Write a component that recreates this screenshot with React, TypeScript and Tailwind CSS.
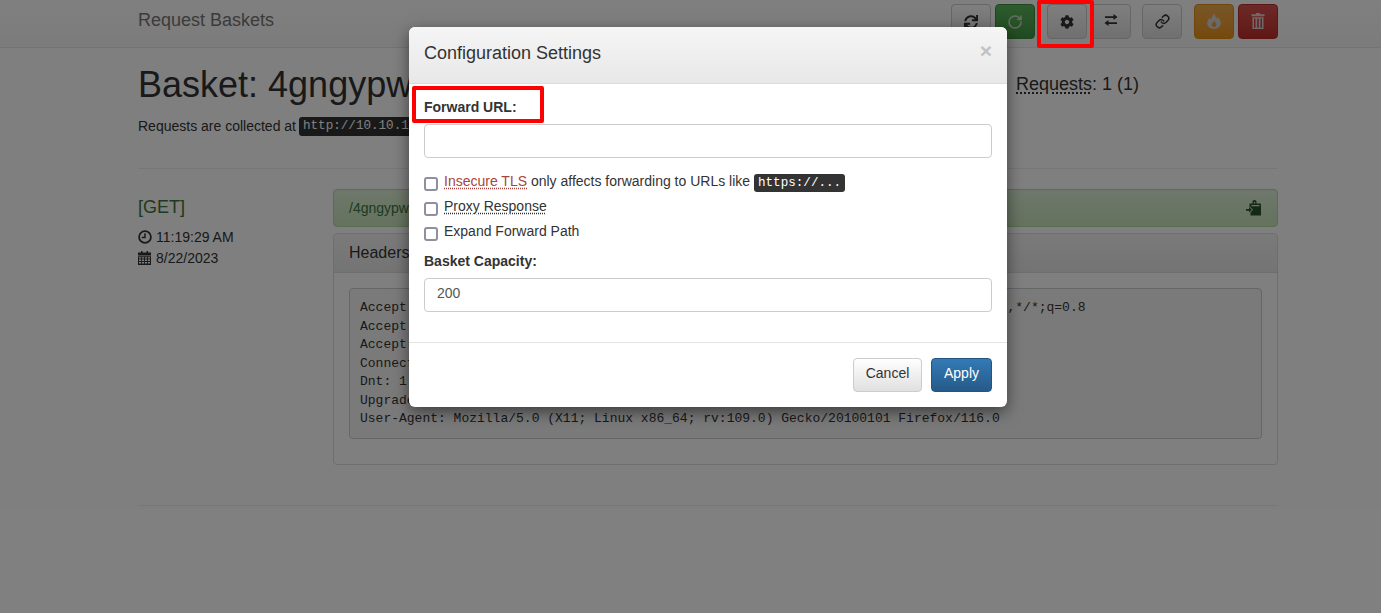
import React from "react";
import { FaCog, FaSync } from "react-icons/fa";
import { RotateCw, Link as LinkIcon } from "lucide-react";

const HeaderLines = [
  "Accept: text/html,application/xhtml+xml,application/xml;q=0.9,image/avif,image/webp,*/*;q=0.8",
  "Accept-Encoding: gzip, deflate",
  "Accept-Language: en-US,en;q=0.5",
  "Connection: keep-alive",
  "Dnt: 1",
  "Upgrade-Insecure-Requests: 1",
  "User-Agent: Mozilla/5.0 (X11; Linux x86_64; rv:109.0) Gecko/20100101 Firefox/116.0",
];

function Btn({ children, tone = "default" }: { children: React.ReactNode; tone?: "default" | "success" | "warning" | "danger" }) {
  const cls =
    tone === "default"
      ? "from-white to-[#e0e0e0] border-[#ccc] text-[#333]"
      : tone === "success"
      ? "from-[#5cb85c] to-[#419641] border-[#3e8f3e] text-white"
      : tone === "warning"
      ? "from-[#f0ad4e] to-[#eb9316] border-[#e38d13] text-white"
      : "from-[#d9534f] to-[#c12e2a] border-[#b92c28] text-white";
  return (
    <div className={`w-10 h-[35px] flex items-center justify-center rounded border bg-gradient-to-b text-sm ${cls}`}>{children}</div>
  );
}

function Check({ children }: { children: React.ReactNode }) {
  return (
    <label className="flex items-start h-5 mb-[5px]">
      <input type="checkbox" className="appearance-none w-[14px] h-[14px] mt-[6px] mr-[6px] bg-white border-2 border-[#8f8f9d] rounded-[3px]" />
      <span>{children}</span>
    </label>
  );
}

const ExchangeIcon = () => (
  <svg viewBox="0 0 14 14" className="w-[14px] h-[14px] -translate-y-[2px]" fill="currentColor">
    <path d="M1 3.2h8.5V1l4 3-4 3V4.9H1z" />
    <path d="M13 9.2H4.5V7l-4 3 4 3v-2.1H13z" />
  </svg>
);

const FlameIcon = () => (
  <svg viewBox="0 0 14 16" className="w-[14px] h-4 text-[#d4d4d4] -translate-y-[1px]" fill="currentColor" fillRule="evenodd">
    <path d="M7 0c.7 2.600 2.200 3.200 2 5.800.8-.3 1.200-1 1.200-2C12.500 5.900 14 8 13.800 10.600 13.500 13.800 10.800 16 7 16s-6.600-2.200-6.800-5.400C0 8 1.800 6.200 3 4.400c.3 1.100.7 1.700 1.300 2C4.500 4 6.200 2.400 7 0zm.2 7.500c-.2 1.300-2.400 2.400-2.400 4.400 0 1.300 1 2.100 2.200 2.100s2.400-.8 2.400-2.300c0-1.800-1.900-2.700-2.200-4.200z" />
  </svg>
);

const TrashIcon = () => (
  <svg viewBox="0 0 14 16" className="w-[14px] h-4 text-[#e3d3d2] -translate-y-[1px]" fill="currentColor">
    <path d="M5 0h4v1.300h4.500v2H.5v-2H5z" />
    <path fillRule="evenodd" d="M1.500 4.200h11V16h-11zM3 5.500v9.200h1.500V5.500zm3.200 0v9.200h1.600V5.500zm3.300 0v9.200H11V5.500z" />
  </svg>
);

const ClockIcon = () => (
  <svg viewBox="0 0 14 14" className="w-[14px] h-[14px]" fill="none" stroke="currentColor">
    <circle cx="7" cy="7" r="5.900" strokeWidth="1.800" />
    <path d="M7 3.200V7.500H3.800" strokeWidth="1.500" />
  </svg>
);

const CalendarIcon = () => (
  <svg viewBox="0 0 13 14" className="w-[13px] h-[14px]" fill="currentColor">
    <path d="M3 0h1.500v1.500h4V0H10v1.500h3v3H0v-3h3z" />
    <path fillRule="evenodd" d="M0 5.200h13V14H0zM1 6.200v1.400h2.200V6.200zm3 0v1.400h2.100V6.200zm3 0v1.400h2.100V6.200zm3 0v1.400h2V6.200zM1 8.600V10h2.200V8.600zm3 0V10h2.100V8.600zm3 0V10h2.100V8.600zm3 0V10h2V8.600zM1 11v1.500h2.200V11zm3 0v1.500h2.100V11zm3 0v1.500h2.100V11zm3 0v1.500h2V11z" />
  </svg>
);

const ClipboardIcon = () => (
  <svg viewBox="0 0 16 16" className="w-4 h-4 text-[#2b542c]" fill="currentColor">
    <path fillRule="evenodd" d="M3.500 3.500h3V1.800C6.500 .8 7.200 0 8.500 0s2 .8 2 1.800v1.700h3.500c.5 0 1 .4 1 1V15.500H4.500v-3l2.500-2.700-2.500-2.500h-1zM8 3.500h1.200V2H8zM5.500 5v1.300h8V5z" />
    <path d="M0 9h3V7.200l3 2.600-3 2.600V10.700H0z" />
  </svg>
);

export default function App() {
  return (
    <div className="relative w-[1381px] h-[613px] overflow-hidden bg-white text-[#333] text-sm leading-5 font-['Liberation_Sans',Arial,sans-serif]">
      {/* page */}
      <nav className="h-[48px] border-b border-[#e7e7e7] bg-gradient-to-b from-white to-[#f8f8f8]">
        <div className="ml-[138px] w-[1140px] h-full flex items-start justify-between">
          <span className="text-lg text-[#777] mt-[6px]">Request Baskets</span>
          <div className="flex mt-1">
            <div className="flex gap-1">
              <Btn><FaSync size={14} /></Btn>
              <Btn tone="success"><RotateCw size={16} strokeWidth={2.4} className="text-[#c6d6c6]" /></Btn>
            </div>
            <div className="flex gap-1 ml-3">
              <Btn><FaCog size={14} /></Btn>
              <Btn><ExchangeIcon /></Btn>
            </div>
            <div className="ml-[11px]">
              <Btn><LinkIcon size={15} strokeWidth={2.4} /></Btn>
            </div>
            <div className="flex gap-1 ml-3">
              <Btn tone="warning"><FlameIcon /></Btn>
              <Btn tone="danger"><TrashIcon /></Btn>
            </div>
          </div>
        </div>
      </nav>

      <main className="ml-[138px] w-[1140px]">
        <div className="h-[121px] border-b border-[#eee] relative">
          <div className="flex justify-between pt-[17px]">
            <h1 className="text-[36px] leading-10 font-normal">Basket: 4gngypw</h1>
            <div className="text-lg w-[262px] pt-[9px] leading-5">
              <abbr className="underline decoration-dotted underline-offset-[3px]">Requests</abbr>
              <span>: 1 (1)</span>
            </div>
          </div>
          <p className="mt-[11px] flex items-center">
            Requests are collected at
            <code className="ml-[3px] bg-[#333] text-white rounded-[3px] px-1 py-[2px] text-[12.6px] leading-[15px] font-['Liberation_Mono',monospace]">http://10.10.14.10:55555/4gngypw</code>
          </p>
        </div>

        <div className="flex mt-[20px]">
          <div className="w-[195px] shrink-0">
            <div className="text-lg text-[#3c763d] mt-[8px] leading-5">[GET]</div>
            <div className="mt-[10px] flex items-center gap-[4px] h-5"><ClockIcon />11:19:29 AM</div>
            <div className="mt-[1px] flex items-center gap-[5px] h-5"><CalendarIcon />8/22/2023</div>
          </div>
          <div className="flex-1">
            <div className="h-[38px] rounded border border-[#b2dba1] bg-gradient-to-b from-[#dff0d8] to-[#c8e5bc] text-[#3c763d] px-[15px] flex items-center justify-between">
              <span>/4gngypw</span>
              <ClipboardIcon />
            </div>
            <section className="mt-[6px] h-[232px] rounded border border-[#ddd]">
              <div className="h-[39px] bg-gradient-to-b from-[#f5f5f5] to-[#e8e8e8] border-b border-[#ddd] px-[15px] flex items-center text-base rounded-t">Headers</div>
              <pre className="mt-[15px] mx-[15px] h-[151px] px-[10px] pt-[10px] bg-[#f5f5f5] border border-[#ccc] rounded text-[13px] leading-[18.57px] font-['Liberation_Mono',monospace]">
                {HeaderLines.join("\n")}
              </pre>
            </section>
          </div>
        </div>
        <hr className="mt-[40px] border-[#eee]" />
      </main>

      {/* backdrop */}
      <div className="absolute inset-0 bg-black/50" />

      {/* modal */}
      <div className="absolute left-[409px] top-[27px] w-[598px] h-[380px] bg-white rounded-md shadow-[0_5px_15px_rgba(0,0,0,0.5)]">
        <div className="h-[57px] rounded-t-md bg-gradient-to-b from-[#f5f5f5] to-[#e8e8e8] border-b border-[#ddd] px-[15px] flex items-center justify-between">
          <h4 className="text-lg leading-5 font-normal -mt-1">Configuration Settings</h4>
          <span className="text-[21px] font-bold leading-none text-[#c2c2c2] -mt-[9px]">×</span>
        </div>
        <div className="px-[15px] pt-[13px]">
          <label className="block font-bold h-5">Forward URL:</label>
          <input className="block mt-[7px] w-full h-[34px] border border-[#ccc] rounded bg-white" />
          <div className="mt-[13px]">
            <Check>
              <abbr className="underline decoration-dotted decoration-[#a94442] underline-offset-2 text-[#a94442]">Insecure TLS</abbr> only affects forwarding to URLs like{" "}
              <kbd className="bg-[#333] text-white rounded-[3px] px-1 py-[2px] text-[12.6px] font-['Liberation_Mono',monospace]">https://...</kbd>
            </Check>
            <Check>
              <abbr className="underline decoration-dotted underline-offset-2">Proxy Response</abbr>
            </Check>
            <Check>Expand Forward Path</Check>
          </div>
          <label className="block font-bold h-5 mt-[10px]">Basket Capacity:</label>
          <input readOnly value="200" className="block mt-[7px] w-full h-[34px] pb-1 border border-[#ccc] rounded bg-white px-3 text-[#555]" />
        </div>
        <div className="mt-[30px] border-t border-[#e5e5e5] px-[15px] pt-[15px] flex justify-end gap-[9px]">
          <button className="w-[69px] h-[34px] pb-1 rounded border border-[#ccc] bg-gradient-to-b from-white to-[#e0e0e0]">Cancel</button>
          <button className="w-[61px] h-[34px] pb-1 rounded border border-[#245580] bg-gradient-to-b from-[#337ab7] to-[#265a88] text-white">Apply</button>
        </div>
      </div>

      {/* annotations */}
      <div className="absolute left-[1037px] top-0 w-[57px] h-[48px] border-4 border-[#f00] rounded-[2px]" />
      <div className="absolute left-[412px] top-[86px] w-[132px] h-[37px] border-4 border-[#f00] rounded-[2px]" />
    </div>
  );
}
